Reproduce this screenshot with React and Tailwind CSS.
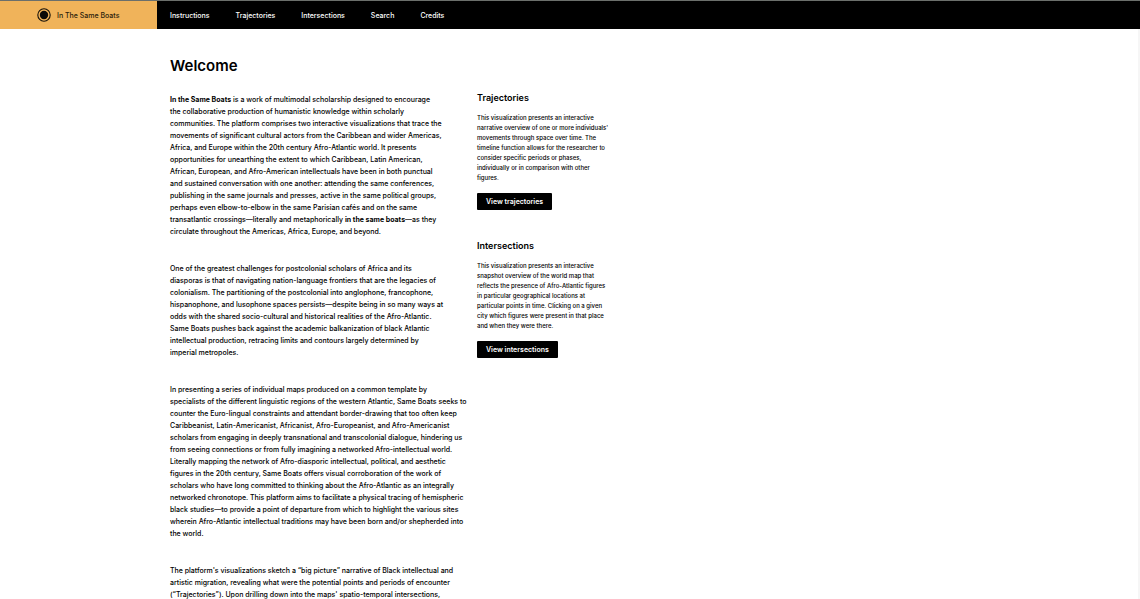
const navItems = ["Instructions", "Trajectories", "Intersections", "Search", "Credits"];

const paragraphs = [
  [
    <><strong className="font-bold">In the Same Boats</strong> is a work of multimodal scholarship designed to encourage</>,
    "the collaborative production of humanistic knowledge within scholarly",
    "communities. The platform comprises two interactive visualizations that trace the",
    "movements of significant cultural actors from the Caribbean and wider Americas,",
    "Africa, and Europe within the 20th century Afro-Atlantic world. It presents",
    "opportunities for unearthing the extent to which Caribbean, Latin American,",
    "African, European, and Afro-American intellectuals have been in both punctual",
    "and sustained conversation with one another: attending the same conferences,",
    "publishing in the same journals and presses, active in the same political groups,",
    "perhaps even elbow-to-elbow in the same Parisian cafés and on the same",
    <>transatlantic crossings—literally and metaphorically <strong className="font-bold">in the same boats</strong>—as they</>,
    "circulate throughout the Americas, Africa, Europe, and beyond.",
  ],
  [
    "One of the greatest challenges for postcolonial scholars of Africa and its",
    "diasporas is that of navigating nation-language frontiers that are the legacies of",
    "colonialism. The partitioning of the postcolonial into anglophone, francophone,",
    "hispanophone, and lusophone spaces persists—despite being in so many ways at",
    "odds with the shared socio-cultural and historical realities of the Afro-Atlantic.",
    "Same Boats pushes back against the academic balkanization of black Atlantic",
    "intellectual production, retracing limits and contours largely determined by",
    "imperial metropoles.",
  ],
  [
    "In presenting a series of individual maps produced on a common template by",
    "specialists of the different linguistic regions of the western Atlantic, Same Boats seeks to",
    "counter the Euro-lingual constraints and attendant border-drawing that too often keep",
    "Caribbeanist, Latin-Americanist, Africanist, Afro-Europeanist, and Afro-Americanist",
    "scholars from engaging in deeply transnational and transcolonial dialogue, hindering us",
    "from seeing connections or from fully imagining a networked Afro-intellectual world.",
    "Literally mapping the network of Afro-diasporic intellectual, political, and aesthetic",
    "figures in the 20th century, Same Boats offers visual corroboration of the work of",
    "scholars who have long committed to thinking about the Afro-Atlantic as an integrally",
    "networked chronotope. This platform aims to facilitate a physical tracing of hemispheric",
    "black studies—to provide a point of departure from which to highlight the various sites",
    "wherein Afro-Atlantic intellectual traditions may have been born and/or shepherded into",
    "the world.",
  ],
  [
    "The platform's visualizations sketch a “big picture” narrative of Black intellectual and",
    "artistic migration, revealing what were the potential points and periods of encounter",
    "(“Trajectories”). Upon drilling down into the maps' spatio-temporal intersections,",
  ],
];

const cards = [
  {
    title: "Trajectories",
    action: "View trajectories",
    lines: [
      "This visualization presents an interactive",
      "narrative overview of one or more individuals'",
      "movements through space over time. The",
      "timeline function allows for the researcher to",
      "consider specific periods or phases,",
      "individually or in comparison with other",
      "figures.",
    ],
  },
  {
    title: "Intersections",
    action: "View intersections",
    lines: [
      "This visualization presents an interactive",
      "snapshot overview of the world map that",
      "reflects the presence of Afro-Atlantic figures",
      "in particular geographical locations at",
      "particular points in time. Clicking on a given",
      "city which figures were present in that place",
      "and when they were there.",
    ],
  },
];

function Lines({ lines }) {
  return lines.map((line, i) => (
    <span key={i} className="block whitespace-nowrap">{line}</span>
  ));
}

export default function App() {
  return (
    <div className="h-screen overflow-hidden bg-white font-['Inter','Liberation_Sans',sans-serif] text-black">
      <header className="flex h-[29px] border-t border-[#6b6f6b] bg-black">
        <a href="#home" className="flex w-[157px] shrink-0 items-center gap-[6px] bg-[#f0b35a] pl-[37px] text-[7px] font-medium text-[#2b1d0b]">
          <svg viewBox="0 0 14 14" className="size-[14px]" aria-hidden="true">
            <circle cx="7" cy="7" r="6.2" fill="none" stroke="#17120a" strokeWidth="1.1" />
            <circle cx="7" cy="7" r="4.2" fill="#0d0b08" />
          </svg>
          <span className="pt-[2px]">In The Same Boats</span>
        </a>
        <nav className="flex items-center gap-[26px] pt-[2px] pl-[13px] text-[7px] font-medium text-white">
          {navItems.map((item) => (
            <a key={item} href={"#" + item.toLowerCase()}>{item}</a>
          ))}
        </nav>
      </header>
      <main className="border-r-2 border-[#f6f6f6] pt-[27px] pl-[170px]">
        <h1 className="text-[15px] leading-[20px] font-semibold">Welcome</h1>
        <div className="flex items-start gap-[13px] pt-[17px]">
          <article className="flex w-[294px] shrink-0 flex-col gap-[25px] pt-[1px] text-[7px] leading-[12px] font-medium">
            {paragraphs.map((lines, i) => (
              <p key={i}><Lines lines={lines} /></p>
            ))}
          </article>
          <aside className="flex flex-col gap-[31px]">
            {cards.map((card) => (
              <section key={card.title} className="flex flex-col items-start">
                <h2 className="text-[9px] leading-[9px] font-semibold">{card.title}</h2>
                <p className="pt-[11px] text-[6px] leading-[10px] font-medium"><Lines lines={card.lines} /></p>
                <button type="button" className="mt-[10px] h-[17px] rounded-[1px] bg-black px-[9px] text-[7px] leading-[17px] font-semibold text-white">
                  {card.action}
                </button>
              </section>
            ))}
          </aside>
        </div>
      </main>
    </div>
  );
}
